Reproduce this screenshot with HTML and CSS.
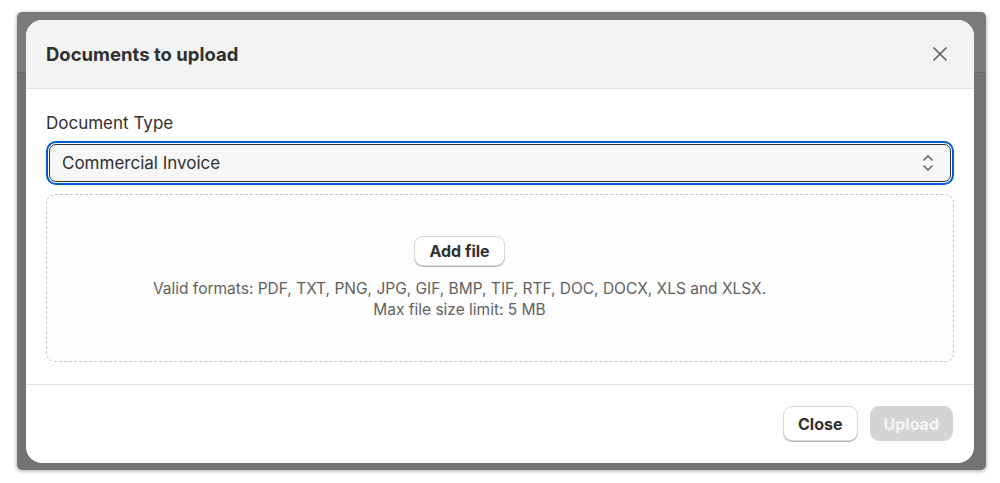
FILE: index.html
```html
<!DOCTYPE html>
<html lang="en">
<head>
<meta charset="utf-8">
<title>Documents to upload</title>
<link rel="stylesheet" href="styles.css">
</head>
<body>
<div class="backdrop">
  <div class="modal">
    <div class="modal-header">
      <h2 class="modal-title">Documents to upload</h2>
      <button class="icon-btn" aria-label="Close">
        <svg width="20" height="20" viewBox="0 0 20 20"><path d="M4 4 L16 16 M16 4 L4 16" stroke="#616161" stroke-width="1.7" stroke-linecap="round" fill="none"/></svg>
      </button>
    </div>
    <div class="modal-body">
      <label class="field-label">Document Type</label>
      <div class="select">
        <span class="select-value">Commercial Invoice</span>
        <svg class="chevrons" width="12" height="18" viewBox="0 0 12 18"><path d="M2 6 L6 2 L10 6 M2 12 L6 16 L10 12" stroke="#616161" stroke-width="1.6" stroke-linecap="round" stroke-linejoin="round" fill="none"/></svg>
      </div>
      <div class="dropzone">
        <button class="btn btn-secondary btn-small">Add file</button>
        <p class="hint">Valid formats: PDF, TXT, PNG, JPG, GIF, BMP, TIF, RTF, DOC, DOCX, XLS and XLSX.<br>Max file size limit: 5 MB</p>
      </div>
    </div>
    <div class="modal-footer">
      <button class="btn btn-secondary">Close</button>
      <button class="btn btn-disabled">Upload</button>
    </div>
  </div>
</div>
</body>
</html>
```

FILE: styles.css
```css
* { box-sizing: border-box; }
html, body { margin: 0; padding: 0; background: #ffffff; }
body {
  font-family: Inter, "Noto Sans", "Liberation Sans", sans-serif;
  color: #303030;
  width: 1000px;
  height: 483px;
  overflow: hidden;
}
.backdrop {
  margin: 12px 0 0 17px;
  width: 969px;
  height: 458px;
  border-radius: 5px;
  background: linear-gradient(to bottom, #7b7b7b 0, #7b7b7b 60px, #686868 60px, #686868 61px, #737373 61px);
  box-shadow: 0 1px 4px rgba(0,0,0,0.35);
  padding: 8px 12px 7px 9px;
}
.modal {
  width: 948px;
  height: 443px;
  background: #ffffff;
  border-radius: 16px;
  overflow: hidden;
  display: flex;
  flex-direction: column;
}
.modal-header {
  height: 69px;
  flex: none;
  background: #f3f3f3;
  border-bottom: 1px solid #e3e3e3;
  display: flex;
  align-items: center;
  justify-content: space-between;
  padding: 0 24px 0 20px;
}
.modal-title {
  margin: 0;
  font-size: 18.5px;
  font-weight: 700;
  color: #303030;
}
.icon-btn {
  border: 0;
  background: transparent;
  padding: 0;
  width: 20px;
  height: 20px;
  display: flex;
}
.modal-body {
  padding: 24px 20px 22px;
  border-bottom: 1px solid #e3e3e3;
  display: flex;
  flex-direction: column;
}
.field-label {
  font-size: 17px;
  line-height: 20px;
  color: #303030;
}
.select {
  margin: 11px 3px 0;
  height: 38px;
  border: 1px solid #303030;
  border-radius: 7px;
  outline: 2px solid #005bd3;
  outline-offset: 1px;
  background: #f7f7f7;
  display: flex;
  align-items: center;
  justify-content: space-between;
  padding: 0 16px 0 12px;
}
.select-value {
  font-size: 17px;
  color: #303030;
}
.dropzone {
  margin-top: 12px;
  height: 168px;
  border: 1px dashed #c4c4c4;
  border-radius: 9px;
  background: #fdfdfd;
  display: flex;
  flex-direction: column;
  align-items: center;
  justify-content: center;
  padding-right: 81px;
}
.hint {
  margin: 12px 0 0;
  font-size: 15.5px;
  line-height: 21px;
  color: #616161;
  text-align: center;
}
.btn {
  font-family: Inter, "Noto Sans", "Liberation Sans", sans-serif;
  font-size: 16px;
  font-weight: 700;
  border-radius: 9px;
  padding: 0 14px;
  height: 35px;
  cursor: pointer;
}
.btn-secondary {
  background: #ffffff;
  color: #303030;
  border: 1px solid #d6d6d6;
  box-shadow: 0 1px 0 #b5b5b5;
}
.btn-small { height: 30px; }
.btn-disabled {
  background: #d4d4d4;
  color: #f3f3f3;
  border: 1px solid #d4d4d4;
  padding: 0 13px;
}
.modal-footer {
  flex: 1;
  display: flex;
  justify-content: flex-end;
  align-items: center;
  gap: 12px;
  padding: 0 21px 1px 20px;
}
```
